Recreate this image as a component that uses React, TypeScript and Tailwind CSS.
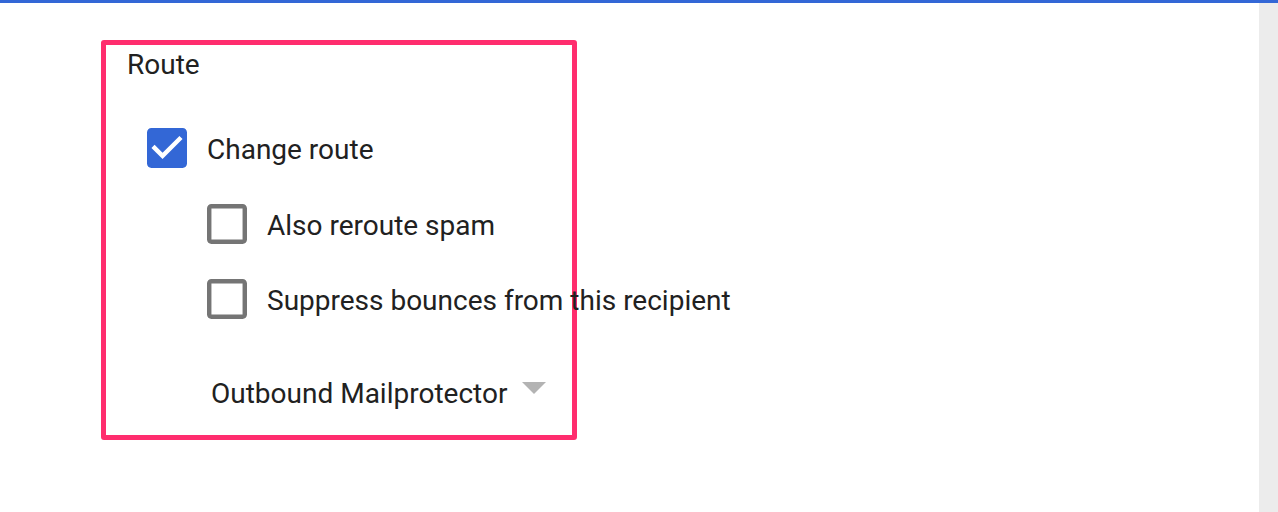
import React, { useState } from 'react';

const CheckedIcon: React.FC = () => (
  <svg viewBox="3 3 18 18" className="w-[40px] h-[40px] shrink-0" fill="#3367d6">
    <path d="M19 3H5c-1.11 0-2 .9-2 2v14c0 1.1.89 2 2 2h14c1.11 0 2-.9 2-2V5c0-1.1-.89-2-2-2zm-9 14l-5-5 1.41-1.41L10 14.170l7.59-7.59L19 8l-9 9z" />
  </svg>
);

const UncheckedIcon: React.FC = () => (
  <svg viewBox="3 3 18 18" className="w-[40px] h-[40px] shrink-0" fill="#757575">
    <path d="M19 5v14H5V5h14m0-2H5c-1.1 0-2 .9-2 2v14c0 1.1.9 2 2 2h14c1.1 0 2-.9 2-2V5c0-1.1-.9-2-2-2z" />
  </svg>
);

interface CheckRowProps {
  label: string;
  checked: boolean;
  onToggle: () => void;
  className?: string;
}

const CheckRow: React.FC<CheckRowProps> = ({ label, checked, onToggle, className = '' }) => (
  <label
    onClick={onToggle}
    className={`flex items-center h-[40px] gap-[20px] cursor-pointer whitespace-nowrap ${className}`}
  >
    {checked ? <CheckedIcon /> : <UncheckedIcon />}
    <span className="text-[28px] leading-[32px] pt-[4px] text-[#212121]">{label}</span>
  </label>
);

const App: React.FC = () => {
  const [changeRoute, setChangeRoute] = useState(true);
  const [rerouteSpam, setRerouteSpam] = useState(false);
  const [suppress, setSuppress] = useState(false);

  return (
    <div className="w-[1278px] h-[512px] bg-white flex flex-col overflow-hidden font-['Roboto',sans-serif]">
      {/* Top accent bar */}
      <div className="h-[3px] bg-[#3367d6] shrink-0" />

      <div className="flex flex-1">
        <div className="flex-1 pl-[101px] pt-[37px]">
          {/* Route section */}
          <div className="w-[476px] h-[400px] border-[5px] border-[#ff2d6e] rounded-[3px] pl-[21px] pt-[4px]">
            <h3 className="text-[28px] leading-[32px] text-[#212121]">Route</h3>

            <div className="pl-[20px] mt-[47px]">
              <CheckRow
                label="Change route"
                checked={changeRoute}
                onToggle={() => setChangeRoute(!changeRoute)}
              />
              <div className="pl-[60px]">
                <CheckRow
                  label="Also reroute spam"
                  checked={rerouteSpam}
                  onToggle={() => setRerouteSpam(!rerouteSpam)}
                  className="mt-[36px]"
                />
                <CheckRow
                  label="Suppress bounces from this recipient"
                  checked={suppress}
                  onToggle={() => setSuppress(!suppress)}
                  className="mt-[35px]"
                />

                {/* Outbound route select */}
                <div className="flex items-center mt-[59px] ml-[4px] cursor-pointer">
                  <span className="text-[28px] leading-[32px] text-[#212121] whitespace-nowrap">
                    Outbound Mailprotector
                  </span>
                  <svg viewBox="0 0 24 12" className="w-[24px] h-[12px] ml-[15px] mb-[12px]" fill="#b3b3b3">
                    <path d="M0 0h24L12 12z" />
                  </svg>
                </div>
              </div>
            </div>
          </div>
        </div>

        {/* Scrollbar track */}
        <div className="w-[19px] bg-[#ececec] shrink-0" />
      </div>
    </div>
  );
};

export default App;
